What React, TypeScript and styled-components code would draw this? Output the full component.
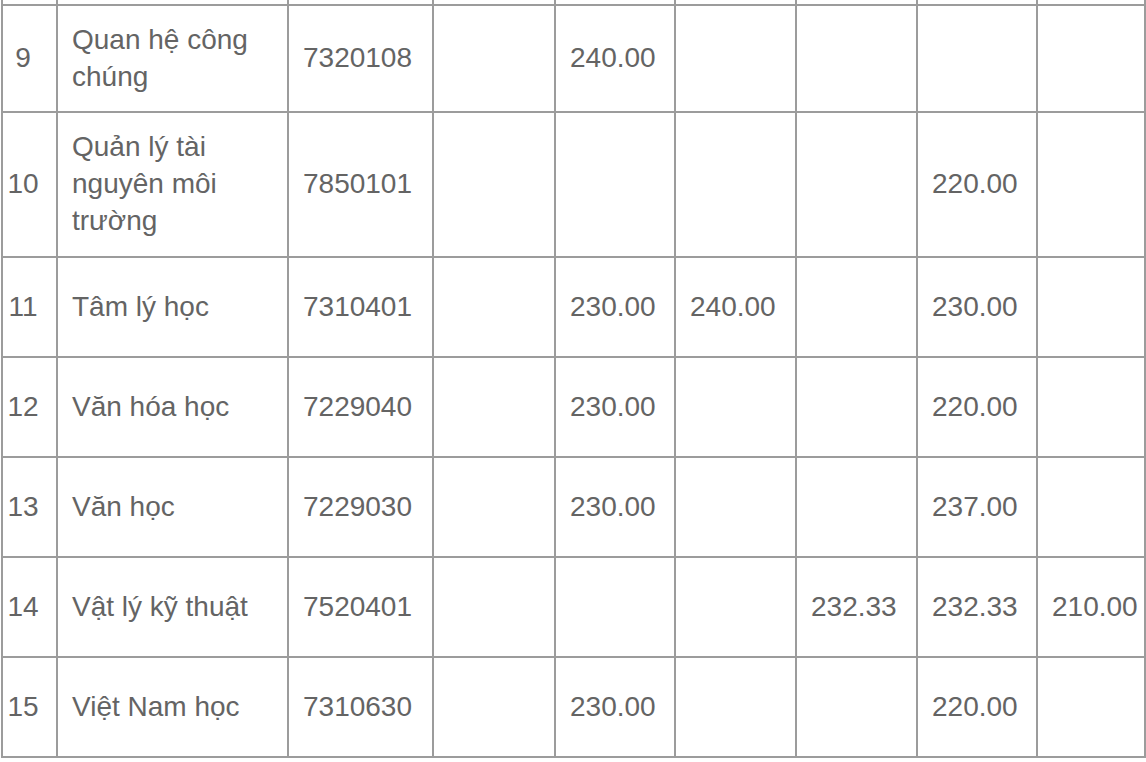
import styled, { createGlobalStyle } from 'styled-components';

const GlobalStyle = createGlobalStyle`
  html, body {
    margin: 0;
    padding: 0;
    background: #ffffff;
  }
  body {
    font-family: "Liberation Sans", Arial, Helvetica, sans-serif;
  }
`;

const Page = styled.div`
  width: 1146px;
  height: 762px;
  overflow: hidden;
  background: #fff;
`;

const Table = styled.table`
  border-collapse: collapse;
  table-layout: fixed;
  width: 1143px;
  margin-top: -96px;
  margin-left: 1px;
  color: #646464;
  font-size: 28px;
  line-height: 37px;
`;

const Row = styled.tr<{ $h: number }>`
  height: ${(p) => p.$h}px;
`;

const Cell = styled.td`
  border: 2px solid #9c9c9c;
  padding: 0 6px 2px 14px;
  vertical-align: middle;
  text-align: left;
  white-space: normal;
`;

const NoCell = styled(Cell)`
  padding: 0 15px 2px 2px;
  text-align: center;
`;

const widths = [55, 231, 145, 122, 120, 121, 121, 120, 108];

type Item = {
  no: string;
  name: string;
  code: string;
  scores: string[];
  h: number;
};

const rows: Item[] = [
  { no: '8', name: '', code: '', scores: ['', '', '', '', '', ''], h: 100 },
  { no: '9', name: 'Quan hệ công chúng', code: '7320108', scores: ['', '240.00', '', '', '', ''], h: 107 },
  { no: '10', name: 'Quản lý tài nguyên môi trường', code: '7850101', scores: ['', '', '', '', '220.00', ''], h: 145 },
  { no: '11', name: 'Tâm lý học', code: '7310401', scores: ['', '230.00', '240.00', '', '230.00', ''], h: 100 },
  { no: '12', name: 'Văn hóa học', code: '7229040', scores: ['', '230.00', '', '', '220.00', ''], h: 100 },
  { no: '13', name: 'Văn học', code: '7229030', scores: ['', '230.00', '', '', '237.00', ''], h: 100 },
  { no: '14', name: 'Vật lý kỹ thuật', code: '7520401', scores: ['', '', '', '232.33', '232.33', '210.00'], h: 100 },
  { no: '15', name: 'Việt Nam học', code: '7310630', scores: ['', '230.00', '', '', '220.00', ''], h: 100 },
];

export default function App() {
  return (
    <Page>
      <GlobalStyle />
      <Table>
        <colgroup>
          {widths.map((w, i) => (
            <col key={i} style={{ width: w }} />
          ))}
        </colgroup>
        <tbody>
          {rows.map((r) => (
            <Row key={r.no} $h={r.h}>
              <NoCell>{r.no === '8' ? '' : r.no}</NoCell>
              <Cell>{r.name}</Cell>
              <Cell>{r.code}</Cell>
              {r.scores.map((s, i) => (
                <Cell key={i}>{s}</Cell>
              ))}
            </Row>
          ))}
        </tbody>
      </Table>
    </Page>
  );
}
